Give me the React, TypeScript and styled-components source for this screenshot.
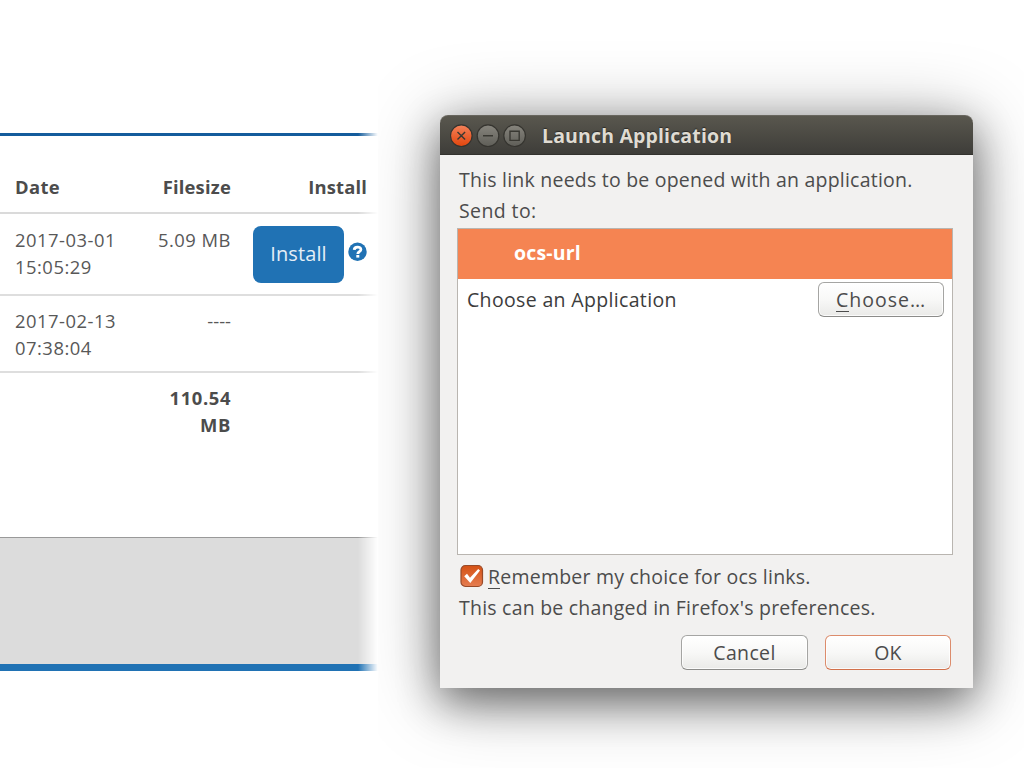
import React from "react";
import styled, { createGlobalStyle } from "styled-components";

const Global = createGlobalStyle`
  * { box-sizing: border-box; }
  body { margin: 0; background: #fff; overflow: hidden; }
`;

const Page = styled.div`
  display: flex;
  align-items: flex-start;
  width: 1024px;
  height: 768px;
  overflow: hidden;
  background: #fff;
`;

const FilesPane = styled.section`
  position: relative;
  z-index: 1;
  width: 378px;
  height: 768px;
  flex: none;
  padding-top: 133px;
  background: #fff;
  font-family: "Open Sans", "Noto Sans", sans-serif;
  color: #555;
`;

const Line = styled.hr<{ $color: string; $height: number }>`
  margin: 0;
  border: 0;
  height: ${(p) => p.$height}px;
  background: ${(p) => p.$color};
  mask-image: linear-gradient(to right, #000 358px, transparent 378px);
`;

const Row = styled.div<{ $height: number; $top: number; $bold?: boolean }>`
  display: grid;
  grid-template-columns: 116px 100px 136px;
  padding: ${(p) => p.$top}px 0 0 15px;
  height: ${(p) => p.$height}px;
  font-size: 18.4px;
  line-height: 26.5px;
  font-weight: ${(p) => (p.$bold ? 700 : 400)};
  color: ${(p) => (p.$bold ? "#4c4c4c" : "#585858")};
`;

const Cell = styled.div<{ $right?: boolean; $spacing?: number }>`
  text-align: ${(p) => (p.$right ? "right" : "left")};
  letter-spacing: ${(p) => p.$spacing ?? 0}px;
  white-space: nowrap;
`;

const InstallCell = styled.div`
  display: flex;
  align-items: flex-start;
  justify-content: flex-end;
  gap: 4px;
  margin-top: -1px;
`;

const InstallButton = styled.button`
  width: 91px;
  height: 57px;
  padding: 0 0 2px;
  border: 0;
  border-radius: 8px;
  background: #2072b4;
  color: #e4eef6;
  font: 400 20px "Open Sans", sans-serif;
  letter-spacing: 0.1px;
`;

const HelpIcon = styled.svg`
  display: block;
  margin-top: 16px;
`;

const Footer = styled.div`
  margin-top: 81px;
  height: 134px;
  border-top: 1px solid #999;
  border-bottom: 7px solid #2072b4;
  background: #dcdcdc;
  mask-image: linear-gradient(to right, #000 358px, transparent 378px);
`;

const Dialog = styled.section`
  flex: none;
  width: 533px;
  height: 573px;
  margin: 115px 0 0 62px;
  border-radius: 8px 8px 0 0;
  background: #f2f1f0;
  box-shadow:
    0 14px 40px rgba(0, 0, 0, 0.45),
    0 8px 75px rgba(0, 0, 0, 0.35);
  font-family: "Open Sans", "Noto Sans", sans-serif;
  font-size: 20px;
  color: #4c4c4c;
`;

const TitleBar = styled.header`
  display: flex;
  align-items: center;
  height: 40px;
  padding: 1px 0 0 10px;
  border-radius: 8px 8px 0 0;
  border-top: 1px solid #68665e;
  border-bottom: 1px solid #33322e;
  background: linear-gradient(#59574e, #3e3d39);
`;

const Controls = styled.svg`
  display: block;
  flex: none;
`;

const Text = styled.span<{ $spacing?: number }>`
  font-size: 19.5px;
  letter-spacing: ${(p) => p.$spacing ?? 0.22}px;
  white-space: nowrap;
`;

const Title = styled(Text)`
  margin: 0 0 0 16px;
  color: #dfdbd2;
  font-weight: 700;
  text-shadow: 0 -1px 1px #2c2b28;
`;

const Body = styled.div`
  padding: 9px 20px 0 17px;
`;

const Message = styled.div`
  padding-left: 2px;
  height: 31px;
  line-height: 31px;
`;

const List = styled.div`
  width: 496px;
  height: 327px;
  margin-top: 2px;
  border: 1px solid #b9b5b0;
  background: #fff;
`;

const Selected = styled.div`
  display: flex;
  align-items: center;
  height: 50px;
  padding: 0 0 4px 56px;
  background: #f58452;
  color: #fff;
  font-weight: 700;
`;

const Choice = styled.div`
  display: flex;
  align-items: center;
  justify-content: space-between;
  height: 41px;
  padding: 0 8px 0 9px;
  color: #3c3c3c;
`;

const Button = styled.button<{ $width: number; $primary?: boolean }>`
  width: ${(p) => p.$width}px;
  height: 35px;
  padding: 0 0 1px;
  border: 1px solid ${(p) => (p.$primary ? "#dc8c6c" : "#a5a5a3")};
  border-bottom-color: ${(p) => (p.$primary ? "#d2714b" : "#8c8c8a")};
  border-radius: 6px;
  background: linear-gradient(#fff, #f8f8f7 50%, #eaeae8);
  box-shadow: inset 0 0 0 1px #fffc;
  font-family: inherit;
  color: #4c4c4c;
`;

const Mnemonic = styled.span`
  display: inline-block;
  height: 24px;
  line-height: 24px;
  border-bottom: 1px solid #4c4c4c;
`;

const Remember = styled.label`
  display: flex;
  align-items: center;
  gap: 4px;
  height: 31px;
  margin-top: 6px;
  padding-left: 3px;
`;

const CheckBox = styled.svg`
  display: block;
  flex: none;
  margin-top: -1px;
`;

const Actions = styled.div`
  display: flex;
  justify-content: flex-end;
  gap: 17px;
  margin: 12px 2px 0 0;
`;

const WindowControls = () => (
  <Controls width="76" height="24" viewBox="0 0 76 24">
    <defs>
      <linearGradient id="orange" x2="0" y2="1">
        <stop stopColor="#f4825a" />
        <stop offset="1" stopColor="#e2450c" />
      </linearGradient>
      <linearGradient id="grey" x2="0" y2="1">
        <stop stopColor="#87857d" />
        <stop offset="1" stopColor="#5f5e58" />
      </linearGradient>
    </defs>
    <g stroke="#35342f" strokeWidth="1.2">
      <circle cx="11.3" cy="11.7" r="10.8" fill="url(#orange)" />
      <circle cx="38" cy="11.7" r="10.8" fill="url(#grey)" />
      <circle cx="64.6" cy="11.7" r="10.8" fill="url(#grey)" />
    </g>
    <g fill="none" stroke="#393832" strokeWidth="1.4">
      <path d="M7.5 7.9l7.6 7.6M15.1 7.9l-7.6 7.6M33 11.7h10M60 7.2h9.2v9.2h-9.2z" />
    </g>
  </Controls>
);

export default function App() {
  return (
    <Page>
      <Global />
      <FilesPane>
        <Line $color="#145c9c" $height={3} />
        <Row $bold $height={76} $top={38}>
          <Cell $spacing={0.35}>Date</Cell>
          <Cell $right $spacing={0.2}>Filesize</Cell>
          <Cell $right $spacing={0.15}>Install</Cell>
        </Row>
        <Line $color="#dadada" $height={2} />
        <Row $height={80} $top={13}>
          <Cell $spacing={0.5}>
            2017-03-01
            <br />
            15:05:29
          </Cell>
          <Cell $right $spacing={0.5}>5.09 MB</Cell>
          <InstallCell>
            <InstallButton>Install</InstallButton>
            <HelpIcon width="19" height="20" viewBox="0 0 19 20">
              <circle cx="9.5" cy="9.8" r="9.2" fill="#2072b4" />
              <path
                d="M6.2 7.9C6.4 4.4 12.9 4.2 12.9 7.5C12.9 9.8 9.8 9.6 9.8 12"
                fill="none"
                stroke="#fff"
                strokeWidth="2.8"
              />
              <path d="M8.3 13h3v2.6h-3z" fill="#fff" />
            </HelpIcon>
          </InstallCell>
        </Row>
        <Line $color="#dedede" $height={2} />
        <Row $height={75} $top={12}>
          <Cell $spacing={0.5}>
            2017-02-13
            <br />
            07:38:04
          </Cell>
          <Cell $right>----</Cell>
        </Row>
        <Line $color="#dedede" $height={2} />
        <Row $bold $height={83} $top={12}>
          <Cell />
          <Cell $right $spacing={0.6}>
            110.54
            <br />
            MB
          </Cell>
        </Row>
        <Footer />
      </FilesPane>
      <Dialog>
        <TitleBar>
          <WindowControls />
          <Title $spacing={0.15}>Launch Application</Title>
        </TitleBar>
        <Body>
          <Message>
            <Text>This link needs to be opened with an application.</Text>
          </Message>
          <Message>
            <Text $spacing={0.4}>Send to:</Text>
          </Message>
          <List>
            <Selected>
              <Text $spacing={0.15}>ocs-url</Text>
            </Selected>
            <Choice>
              <Text $spacing={0.34}>Choose an Application</Text>
              <Button $width={126}>
                <Text $spacing={1}>
                  <Mnemonic>C</Mnemonic>hoose…
                </Text>
              </Button>
            </Choice>
          </List>
          <Remember>
            <CheckBox width="24" height="24" viewBox="0 0 24 24">
              <defs>
                <linearGradient id="check" x2="0" y2="1">
                  <stop stopColor="#d55114" />
                  <stop offset="1" stopColor="#e57d51" />
                </linearGradient>
              </defs>
              <rect x="1" y="1.5" width="21.5" height="21" rx="4.5" fill="url(#check)" stroke="#984a29" strokeWidth="1.2" />
              <path d="M4.2 12.2l2.8-2.4 3 4 8.2-8.8 1.8 1.4L10.3 19z" fill="#fff" />
            </CheckBox>
            <Text>
              <Mnemonic>R</Mnemonic>emember my choice for ocs links.
            </Text>
          </Remember>
          <Message>
            <Text>This can be changed in Firefox's preferences.</Text>
          </Message>
          <Actions>
            <Button $width={127}>
              <Text $spacing={0.35}>Cancel</Text>
            </Button>
            <Button $width={126} $primary>
              <Text>OK</Text>
            </Button>
          </Actions>
        </Body>
      </Dialog>
    </Page>
  );
}
